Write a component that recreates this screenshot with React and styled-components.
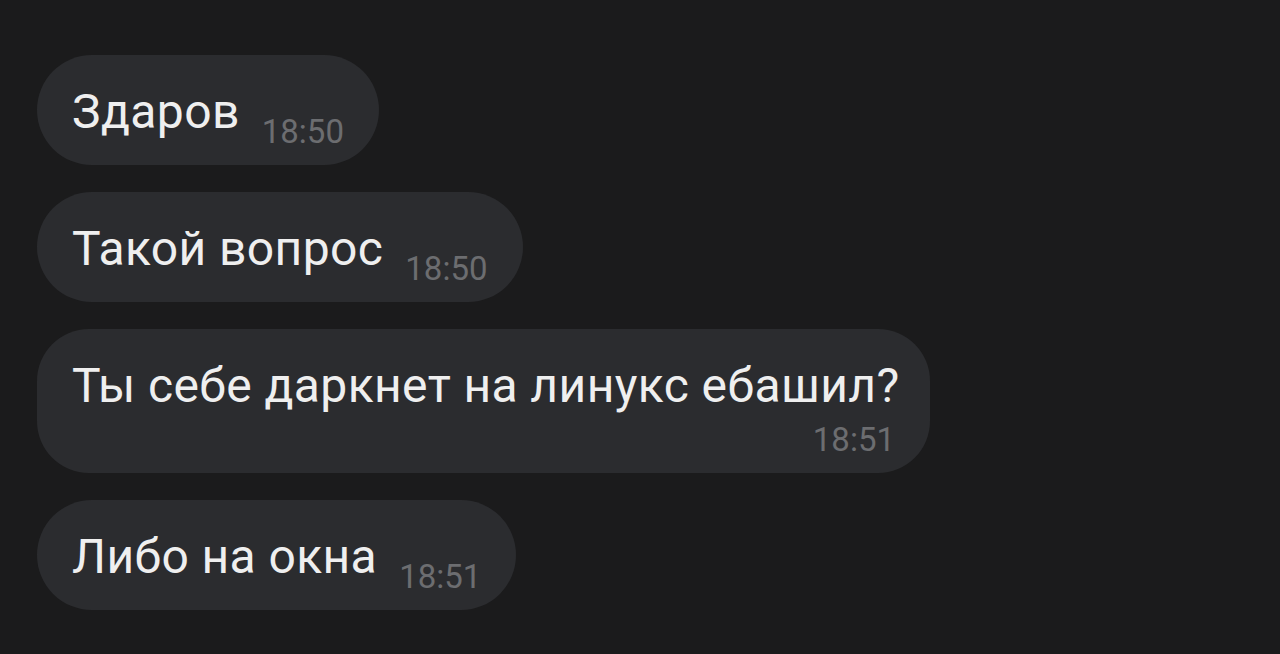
import React from 'react';
import styled, { createGlobalStyle } from 'styled-components';

const GlobalStyle = createGlobalStyle`
  html, body {
    margin: 0;
    padding: 0;
    background-color: #1b1b1c;
  }
  body {
    font-family: Roboto, 'Noto Sans', 'Liberation Sans', sans-serif;
  }
`;

const Screen = styled.div`
  background-color: #1b1b1c;
  box-sizing: border-box;
  display: flex;
  flex-direction: column;
  align-items: flex-start;
  gap: 27px;
  height: 654px;
  overflow: hidden;
  padding: 55px 0 0 37px;
  width: 1280px;
`;

const Bubble = styled.div`
  align-items: flex-end;
  background-color: #2b2c2f;
  border-radius: ${({ $tall }) => ($tall ? '52px' : '55px')};
  box-sizing: border-box;
  column-gap: 22px;
  display: flex;
  flex-wrap: wrap;
  max-width: 893px;
  padding: 29px 33px 26px 35px;
  row-gap: 10px;
`;

const Text = styled.span`
  color: #efefef;
  font-size: 48px;
  letter-spacing: 0.4px;
  line-height: 55px;
  white-space: nowrap;
`;

const Time = styled.span`
  color: #6c6d70;
  font-size: 33px;
  line-height: 33px;
  margin-bottom: -9px;
  margin-left: auto;
  margin-right: 2px;
  white-space: nowrap;
`;

const messages = [
  { id: 1, text: 'Здаров', time: '18:50' },
  { id: 2, text: 'Такой вопрос', time: '18:50' },
  { id: 3, text: 'Ты себе даркнет на линукс ебашил?', time: '18:51', tall: true },
  { id: 4, text: 'Либо на окна', time: '18:51' },
];

const App = () => {
  return (
    <>
      <GlobalStyle />
      <Screen>
        {messages.map((message) => (
          <Bubble key={message.id} $tall={message.tall}>
            <Text>{message.text}</Text>
            <Time>{message.time}</Time>
          </Bubble>
        ))}
      </Screen>
    </>
  );
};

export default App;
